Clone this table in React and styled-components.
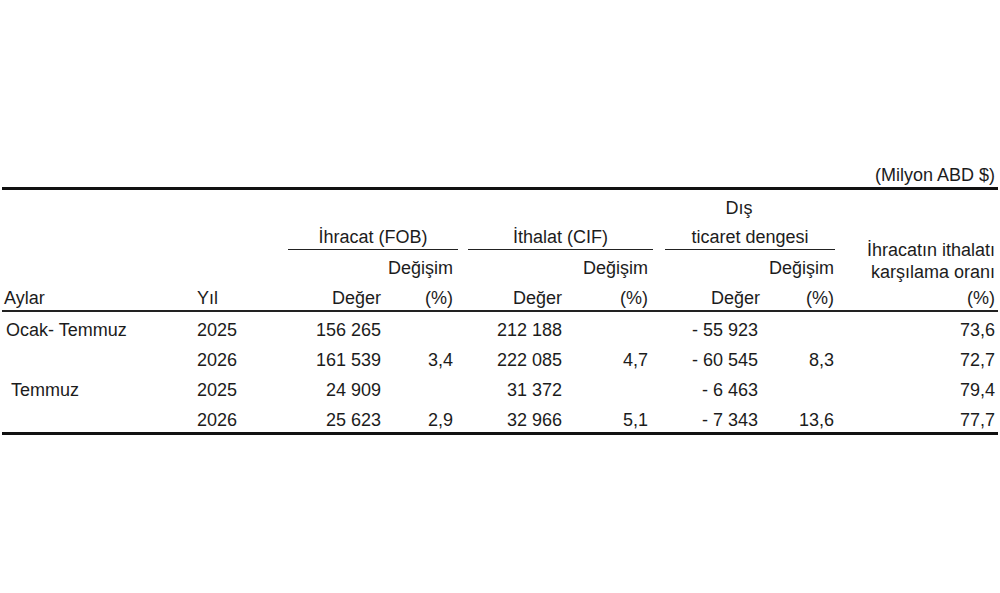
import React from "react";
import styled, { createGlobalStyle } from "styled-components";

const GlobalStyle = createGlobalStyle`
  body {
    margin: 0;
    background: #fff;
    color: #1c1c1c;
    font-family: "Liberation Sans", Arial, sans-serif;
    font-size: 18px;
  }
`;

// column widths of the table, left to right (2 thin gaps between the groups)
const COLS = "195px 91px 107px 63px 10px 107px 78px 12px 105px 65px 163px";

const rows = [
  { month: "Ocak- Temmuz", year: "2025", ex: "156 265", exP: "", im: "212 188", imP: "", bal: "- 55 923", balP: "", ratio: "73,6" },
  { month: "", year: "2026", ex: "161 539", exP: "3,4", im: "222 085", imP: "4,7", bal: "- 60 545", balP: "8,3", ratio: "72,7" },
  { month: "Temmuz", sub: true, year: "2025", ex: "24 909", exP: "", im: "31 372", imP: "", bal: "- 6 463", balP: "", ratio: "79,4" },
  { month: "", year: "2026", ex: "25 623", exP: "2,9", im: "32 966", imP: "5,1", bal: "- 7 343", balP: "13,6", ratio: "77,7" },
];

// where each numeric column sits and how far its text stays off the right edge
const valueCols = [
  { key: "ex", col: 3, pr: 14 },
  { key: "exP", col: 4, pr: 5 },
  { key: "im", col: 6, pr: 13 },
  { key: "imP", col: 7, pr: 5 },
  { key: "bal", col: 9, pr: 12 },
  { key: "balP", col: 10, pr: 1 },
  { key: "ratio", col: 11, pr: 3 },
];

const groups = [
  { title: "İhracat (FOB)", col: "3 / 5", pr: 5 },
  { title: "İthalat (CIF)", col: "6 / 8", pr: 5 },
  { title: "ticaret dengesi", col: "9 / 11", pr: 1 },
];

export default function App() {
  return (
    <>
      <GlobalStyle />
      <Sheet>
        <Unit>(Milyon ABD $)</Unit>
        <Table>
          <Grid $rows={4} $ruled>
            <Cell $col="9 / 11" $row={1} $align="center" $pr={22}>
              Dış
            </Cell>
            {groups.map((g) => (
              <GroupTitle key={g.title} $col={g.col} $row={2} $align="center">
                {g.title}
              </GroupTitle>
            ))}
            {groups.map((g) => (
              <Cell key={"d" + g.col} $col={g.col} $row={3} $align="right" $pr={g.pr}>
                Değişim
              </Cell>
            ))}
            <RatioHead>
              <span>İhracatın ithalatı</span>
              <span>karşılama oranı</span>
              <RatioUnit>(%)</RatioUnit>
            </RatioHead>

            <Cell $col={1} $row={4} $pl={2}>Aylar</Cell>
            <Cell $col={2} $row={4}>Yıl</Cell>
            <Cell $col={3} $row={4} $align="right" $pr={14}>Değer</Cell>
            <Cell $col={4} $row={4} $align="right" $pr={5}>(%)</Cell>
            <Cell $col={6} $row={4} $align="right" $pr={13}>Değer</Cell>
            <Cell $col={7} $row={4} $align="right" $pr={5}>(%)</Cell>
            <Cell $col={9} $row={4} $align="right" $pr={10}>Değer</Cell>
            <Cell $col={10} $row={4} $align="right" $pr={1}>(%)</Cell>
          </Grid>

          <Grid $rows={rows.length}>
            {rows.map((r, i) => (
              <React.Fragment key={i}>
                {r.month && (
                  <Cell $col={1} $row={i + 1} $pl={r.sub ? 9 : 4}>
                    {r.month}
                  </Cell>
                )}
                <Cell $col={2} $row={i + 1}>{r.year}</Cell>
                {valueCols.map((c) =>
                  r[c.key] ? (
                    <Cell key={c.key} $col={c.col} $row={i + 1} $align="right" $pr={c.pr}>
                      {r[c.key]}
                    </Cell>
                  ) : null
                )}
              </React.Fragment>
            ))}
          </Grid>
        </Table>
      </Sheet>
    </>
  );
}

const Sheet = styled.div`
  padding: 163px 2px 0;
`;

const Unit = styled.div`
  height: 24px;
  line-height: 24px;
  text-align: right;
  padding-right: 3px;
`;

const Table = styled.div`
  border-top: 3px solid #111;
  border-bottom: 3px solid #111;
`;

const Grid = styled.div`
  display: grid;
  grid-template-columns: ${COLS};
  grid-template-rows: repeat(${(p) => p.$rows}, 30px);
  border-bottom: ${(p) => (p.$ruled ? "2px solid #222" : "none")};
`;

const Cell = styled.div`
  grid-column: ${(p) => p.$col};
  grid-row: ${(p) => p.$row};
  align-self: end;
  line-height: 24px;
  white-space: nowrap;
  text-align: ${(p) => p.$align || "left"};
  padding: 0 ${(p) => p.$pr || 0}px 0 ${(p) => p.$pl || 0}px;
`;

const GroupTitle = styled(Cell)`
  line-height: 23px;
  border-bottom: 1px solid #222;
`;

const RatioHead = styled.div`
  grid-column: 11;
  grid-row: 1 / 5;
  display: flex;
  flex-direction: column;
  justify-content: flex-end;
  align-items: flex-end;
  padding-right: 3px;
  line-height: 22px;
  white-space: nowrap;
`;

const RatioUnit = styled.span`
  line-height: 24px;
  margin-top: 3px;
`;
